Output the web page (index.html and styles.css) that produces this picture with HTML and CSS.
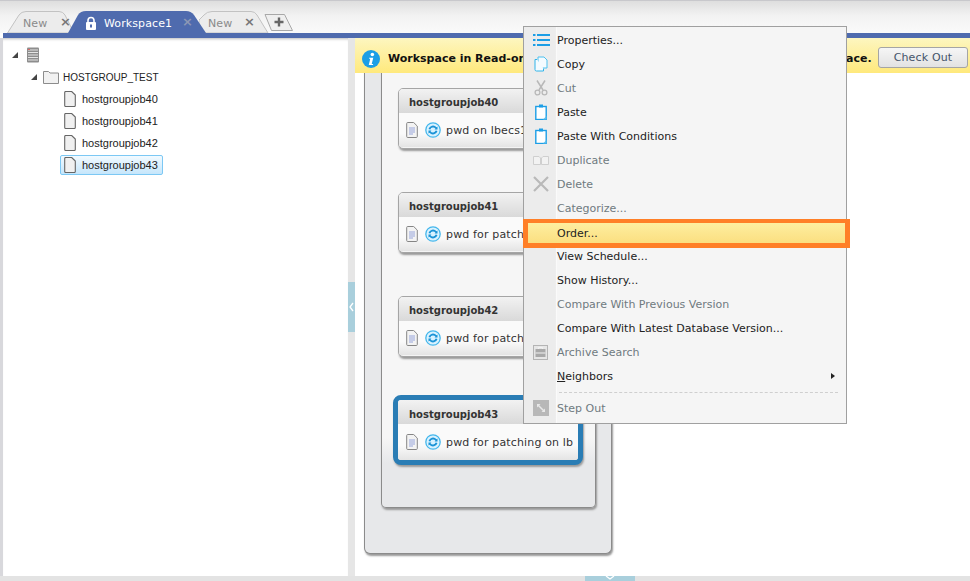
FILE: index.html
```html
<!DOCTYPE html>
<html lang="en">
<head>
<meta charset="utf-8">
<title>Workspace1</title>
<link rel="stylesheet" href="styles.css">
</head>
<body>
<div class="app">
  <div class="tabbar">
    <div class="tab tab-first">
      <svg class="tab-shape" width="68" height="22" viewBox="0 0 68 22"><path d="M0.500 22L12 4Q14.500 0.500 19 0.500H52Q56 0.500 58 4L67 22z" fill="#ececec" stroke="#c2c2c2"/></svg>
      <span class="tab-label">New</span><i class="tab-x">×</i>
    </div>
    <div class="tab tab-active">
      <svg class="tab-shape" width="138" height="22" viewBox="0 0 138 22"><path d="M0 22L10 4Q12.500 0 18 0H118Q123 0 126 4L138 22z" fill="#4f6bae"/></svg>
      <svg class="lock" width="12" height="14" viewBox="0 0 12 14"><path d="M3 7V4.500a3 3 0 0 1 6 0V7" fill="none" stroke="#fff" stroke-width="1.600"/><rect x="1" y="6" width="10" height="8" rx="1" fill="#fff"/><rect x="5" y="8.500" width="2" height="3" fill="#4f6bae"/></svg>
      <span class="tab-label">Workspace1</span><i class="tab-x tab-x-dim">×</i>
    </div>
    <div class="tab tab-third">
      <svg class="tab-shape" width="70" height="22" viewBox="0 0 70 22"><path d="M0 22V9L5 4Q8 0.500 13 0.500H52Q56 0.500 58 4L69 22z" fill="#ececec" stroke="#c2c2c2"/></svg>
      <span class="tab-label">New</span><i class="tab-x tab-x-third">×</i>
    </div>
    <div class="tab-add">
      <svg width="30" height="19" viewBox="0 0 30 19"><path d="M1 1.500H20.500L28.500 17.500H7.500z" fill="#efefef" stroke="#a8a8a8"/><path d="M15 4.500v9M10.500 9h9" stroke="#666" stroke-width="2.400"/></svg>
    </div>
  </div>
  <div class="stripe"></div>
  <div class="content">
    <div class="tree">
      <div class="tree-row tree-root">
        <span class="twist"></span>
        <svg width="14" height="16" viewBox="0 0 14 16"><rect x="1" y="0.500" width="12" height="15" rx="1" fill="#8d8d8d"/><path d="M2 3h10M2 5.500h10M2 8h10M2 10.500h10M2 13h10" stroke="#e4e4e4" stroke-width="1"/><rect x="2" y="2" width="2" height="1" fill="#d66"/></svg>
      </div>
      <div class="tree-row tree-folder">
        <span class="twist"></span>
        <svg width="16" height="14" viewBox="0 0 16 14"><path d="M0.500 13.500V1.500h5l1.500 1.500h8.500v10.500z" fill="#f1f1f1" stroke="#8c8c8c"/></svg>
        <span class="tree-label">HOSTGROUP_TEST</span>
      </div>
      <div class="tree-row tree-job">
        <svg class="file" width="12" height="16" viewBox="0 0 12 16"><path d="M0.700 1.500q0-1 1-1h6l3.600 3.600v10.400q0 1-1 1h-8.600q-1 0-1-1z" fill="#f0f0f0" stroke="#666" stroke-width="1.100"/></svg>
        <span class="tree-label">hostgroupjob40</span>
      </div>
      <div class="tree-row tree-job">
        <svg class="file" width="12" height="16" viewBox="0 0 12 16"><path d="M0.700 1.500q0-1 1-1h6l3.600 3.600v10.400q0 1-1 1h-8.600q-1 0-1-1z" fill="#f0f0f0" stroke="#666" stroke-width="1.100"/></svg>
        <span class="tree-label">hostgroupjob41</span>
      </div>
      <div class="tree-row tree-job">
        <svg class="file" width="12" height="16" viewBox="0 0 12 16"><path d="M0.700 1.500q0-1 1-1h6l3.600 3.600v10.400q0 1-1 1h-8.600q-1 0-1-1z" fill="#f0f0f0" stroke="#666" stroke-width="1.100"/></svg>
        <span class="tree-label">hostgroupjob42</span>
      </div>
      <div class="tree-row tree-job tree-selected">
        <svg class="file" width="12" height="16" viewBox="0 0 12 16"><path d="M0.700 1.500q0-1 1-1h6l3.600 3.600v10.400q0 1-1 1h-8.600q-1 0-1-1z" fill="#f0f0f0" stroke="#666" stroke-width="1.100"/></svg>
        <span class="tree-label">hostgroupjob43</span>
      </div>
    </div>
    <div class="splitter"><div class="split-handle"><svg width="5" height="10" viewBox="0 0 5 10"><path d="M4 1L1 5l3 4" fill="none" stroke="#fff" stroke-width="1.300"/></svg></div></div>
    <div class="main">
      <div class="banner">
        <svg width="18" height="18" viewBox="0 0 20 20"><circle cx="10" cy="10" r="10" fill="#1c9ee6"/><circle cx="11.500" cy="5" r="2" fill="#fff"/><path d="M8 8.500h4.500l-1.700 7h1.500v1.300H7.500l1.700-7H8z" fill="#fff"/></svg>
        <span class="banner-text">Workspace in Read-only mode.</span>
        <span class="banner-end">ace.</span>
        <button class="checkout">Check Out</button>
      </div>
      <div class="box-outer">
        <div class="box-inner">
          <div class="card">
            <div class="card-title">hostgroupjob40</div>
            <div class="card-body">
              <svg width="12" height="16" viewBox="0 0 12 16"><path d="M0.700 1.500q0-1 1-1h6l3.600 3.600v10.400q0 1-1 1h-8.600q-1 0-1-1z" fill="#f3f3f3" stroke="#858585"/><path d="M3 6h6M3 8h6M3 10h6M3 12h4" stroke="#98a6dc" stroke-width="1.200"/></svg>
              <svg width="16" height="16" viewBox="0 0 16 16"><circle cx="8" cy="8" r="7.200" fill="#d9f2ff" stroke="#45b7ec" stroke-width="1.300"/><path d="M3.500 7a4.600 4.600 0 0 1 8-1.800l1-.8v3.200H9.500l1-.9a3 3 0 0 0-5.200.8zM12.500 9a4.600 4.600 0 0 1-8 1.800l-1 .8V8.400h3l-1 .9a3 3 0 0 0 5.200-.8z" fill="#1b93d6"/></svg>
              <span class="card-text">pwd on lbecs1</span>
            </div>
          </div>
          <div class="card">
            <div class="card-title">hostgroupjob41</div>
            <div class="card-body">
              <svg width="12" height="16" viewBox="0 0 12 16"><path d="M0.700 1.500q0-1 1-1h6l3.600 3.600v10.400q0 1-1 1h-8.600q-1 0-1-1z" fill="#f3f3f3" stroke="#858585"/><path d="M3 6h6M3 8h6M3 10h6M3 12h4" stroke="#98a6dc" stroke-width="1.200"/></svg>
              <svg width="16" height="16" viewBox="0 0 16 16"><circle cx="8" cy="8" r="7.200" fill="#d9f2ff" stroke="#45b7ec" stroke-width="1.300"/><path d="M3.500 7a4.600 4.600 0 0 1 8-1.800l1-.8v3.200H9.500l1-.9a3 3 0 0 0-5.200.8zM12.500 9a4.600 4.600 0 0 1-8 1.800l-1 .8V8.400h3l-1 .9a3 3 0 0 0 5.200-.8z" fill="#1b93d6"/></svg>
              <span class="card-text">pwd for patching on lb</span>
            </div>
          </div>
          <div class="card">
            <div class="card-title">hostgroupjob42</div>
            <div class="card-body">
              <svg width="12" height="16" viewBox="0 0 12 16"><path d="M0.700 1.500q0-1 1-1h6l3.600 3.600v10.400q0 1-1 1h-8.600q-1 0-1-1z" fill="#f3f3f3" stroke="#858585"/><path d="M3 6h6M3 8h6M3 10h6M3 12h4" stroke="#98a6dc" stroke-width="1.200"/></svg>
              <svg width="16" height="16" viewBox="0 0 16 16"><circle cx="8" cy="8" r="7.200" fill="#d9f2ff" stroke="#45b7ec" stroke-width="1.300"/><path d="M3.500 7a4.600 4.600 0 0 1 8-1.800l1-.8v3.200H9.500l1-.9a3 3 0 0 0-5.200.8zM12.500 9a4.600 4.600 0 0 1-8 1.800l-1 .8V8.400h3l-1 .9a3 3 0 0 0 5.200-.8z" fill="#1b93d6"/></svg>
              <span class="card-text">pwd for patching on lb</span>
            </div>
          </div>
          <div class="card card-selected">
            <div class="card-title">hostgroupjob43</div>
            <div class="card-body">
              <svg width="12" height="16" viewBox="0 0 12 16"><path d="M0.700 1.500q0-1 1-1h6l3.600 3.600v10.400q0 1-1 1h-8.600q-1 0-1-1z" fill="#f3f3f3" stroke="#858585"/><path d="M3 6h6M3 8h6M3 10h6M3 12h4" stroke="#98a6dc" stroke-width="1.200"/></svg>
              <svg width="16" height="16" viewBox="0 0 16 16"><circle cx="8" cy="8" r="7.200" fill="#d9f2ff" stroke="#45b7ec" stroke-width="1.300"/><path d="M3.500 7a4.600 4.600 0 0 1 8-1.800l1-.8v3.200H9.500l1-.9a3 3 0 0 0-5.200.8zM12.500 9a4.600 4.600 0 0 1-8 1.800l-1 .8V8.400h3l-1 .9a3 3 0 0 0 5.200-.8z" fill="#1b93d6"/></svg>
              <span class="card-text">pwd for patching on lb</span>
            </div>
          </div>
        </div>
      </div>
    </div>
  </div>
  <div class="bottombar"><div class="bottom-handle"><svg width="10" height="5" viewBox="0 0 10 5"><path d="M1 0l4 3 4-3" fill="none" stroke="#fff" stroke-width="1.300"/></svg></div></div>
</div>

<div class="menu">
  <div class="mi"><span class="mi-icon"><svg width="18" height="14" viewBox="0 0 18 14"><path d="M5 2h13M5 7h13M5 12h13" stroke="#1c9ee6" stroke-width="2"/><path d="M1 2h2.500M1 7h2.500M1 12h2.500" stroke="#1c9ee6" stroke-width="2"/></svg></span><span class="mi-label">Properties...</span></div>
  <div class="mi"><span class="mi-icon"><svg width="14" height="16" viewBox="0 0 14 16"><path d="M4 1h6l3 3v8H4z" fill="#f4fbff" stroke="#4cc1ef"/><path d="M3 3.500H1v10q0 1.500 1.500 1.500h7v-2.500" fill="#f4fbff" stroke="#2fb4ea"/></svg></span><span class="mi-label">Copy</span></div>
  <div class="mi mi-off"><span class="mi-icon"><svg width="14" height="16" viewBox="0 0 14 16"><path d="M3 0.500L9 10M11 0.500L5 10" stroke="#b8b8b8" stroke-width="1.500"/><circle cx="3.500" cy="12.500" r="2.400" fill="none" stroke="#b8b8b8" stroke-width="1.300"/><circle cx="10.500" cy="12.500" r="2.400" fill="none" stroke="#b8b8b8" stroke-width="1.300"/></svg></span><span class="mi-label">Cut</span></div>
  <div class="mi"><span class="mi-icon"><svg width="12" height="16" viewBox="0 0 12 16"><rect x="0.800" y="2.500" width="10.400" height="13" fill="#fff" stroke="#1c9ee6" stroke-width="1.400"/><rect x="4" y="0.500" width="4" height="3" fill="#1c9ee6"/><path d="M8 15.500h3.500V12z" fill="#5fc0ee"/></svg></span><span class="mi-label">Paste</span></div>
  <div class="mi"><span class="mi-icon"><svg width="12" height="16" viewBox="0 0 12 16"><rect x="0.800" y="2.500" width="10.400" height="13" fill="#fff" stroke="#1c9ee6" stroke-width="1.400"/><rect x="4" y="0.500" width="4" height="3" fill="#1c9ee6"/><path d="M8 15.500h3.500V12z" fill="#5fc0ee"/></svg></span><span class="mi-label">Paste With Conditions</span></div>
  <div class="mi mi-off"><span class="mi-icon"><svg width="16" height="10" viewBox="0 0 16 10"><path d="M0.500 1.500h5.500l1.500 1.500v6.500h-7zM8.500 3l1.500-1.500h5.500v8h-7z" fill="#f2f2f2" stroke="#cfcfcf"/></svg></span><span class="mi-label">Duplicate</span></div>
  <div class="mi mi-off"><span class="mi-icon"><svg width="16" height="16" viewBox="0 0 16 16"><path d="M1 1l14 14M15 1L1 15" stroke="#b9b9b9" stroke-width="2.200"/></svg></span><span class="mi-label">Delete</span></div>
  <div class="mi mi-off"><span class="mi-icon"></span><span class="mi-label">Categorize...</span></div>
  <div class="mi mi-hot"><span class="mi-icon"></span><span class="mi-label">Order...</span></div>
  <div class="mi"><span class="mi-icon"></span><span class="mi-label">View Schedule...</span></div>
  <div class="mi"><span class="mi-icon"></span><span class="mi-label">Show History...</span></div>
  <div class="mi mi-off"><span class="mi-icon"></span><span class="mi-label">Compare With Previous Version</span></div>
  <div class="mi"><span class="mi-icon"></span><span class="mi-label">Compare With Latest Database Version...</span></div>
  <div class="mi mi-off"><span class="mi-icon"><svg width="15" height="15" viewBox="0 0 15 15"><rect x="0.500" y="0.500" width="14" height="14" fill="#e6e6e6" stroke="#b4b4b4"/><rect x="2.500" y="4" width="10" height="8" fill="#a9a9a9"/><path d="M5.500 4V2.500h4V4M2.500 8h10" fill="none" stroke="#f2f2f2"/></svg></span><span class="mi-label">Archive Search</span></div>
  <div class="mi"><span class="mi-icon"></span><span class="mi-label"><u>N</u>eighbors</span><span class="mi-arrow"></span></div>
  <div class="mi-sep"></div>
  <div class="mi mi-off"><span class="mi-icon"><svg width="16" height="16" viewBox="0 0 16 16"><rect width="16" height="16" fill="#b8b8b8"/><path d="M5 5l6 6" stroke="#e8e8e8" stroke-width="1.500"/><path d="M4 4h3.500L4 7.500zM12 12H8.500L12 8.500z" fill="#e8e8e8"/></svg></span><span class="mi-label">Step Out</span></div>
</div>
</body>
</html>
```

FILE: styles.css
```css
* { box-sizing: border-box; }
html, body { margin: 0; height: 100%; }
body {
  width: 970px;
  height: 581px;
  overflow: hidden;
  position: relative;
  font-family: "DejaVu Sans", "Liberation Sans", sans-serif;
  font-size: 11px;
  background: #fff;
  color: #222;
}
.app { display: flex; flex-direction: column; height: 581px; }

.tabbar {
  height: 33px;
  flex: none;
  display: flex;
  align-items: flex-end;
  padding-left: 7px;
  border-top: 1px solid #c8c8cc;
  background: linear-gradient(#dedede, #f2f2f2 45%, #fafafa);
}
.tab {
  height: 22px;
  display: flex;
  align-items: center;
  position: relative;
  padding-top: 2px;
  font-size: 11px;
  letter-spacing: 0.100px;
}
.tab-shape { position: absolute; left: 0; top: 0; }
.tab-label, .lock { position: relative; }
.tab-first { width: 68px; padding-left: 16px; color: #8a8a8a; }
.tab-active {
  width: 138px;
  margin-left: -7px;
  padding-left: 17px;
  gap: 7px;
  color: #fff;
  z-index: 1;
}
.tab-third { width: 70px; margin-left: -7px; padding-left: 9px; color: #8a8a8a; }
.tab-x {
  position: absolute;
  right: 4px;
  top: 3px;
  font-style: normal;
  font-weight: bold;
  font-size: 13px;
  color: #777;
}
.tab-x-dim { color: #8c97b4; right: 13px; }
.tab-x-third { right: 14px; }
.tab-add { width: 30px; height: 19px; margin-left: -5px; margin-bottom: 1px; }
.tab-add svg { display: block; }
.stripe { height: 5px; flex: none; background: #4f6bae; margin-left: 3px; }

.content { flex: 1; display: flex; min-height: 0; padding-left: 3px; background: #d8d8dc; }
.tree {
  width: 345px;
  flex: none;
  background: #fff;
  padding-top: 6px;
  box-shadow: inset 0 3px 3px -2px #bbb;
}
.tree-row {
  height: 22px;
  display: flex;
  align-items: center;
  color: #222;
  font-family: "Liberation Sans", sans-serif;
  font-size: 11px;
}
.tree-root { padding-left: 9px; gap: 8px; }
.tree-folder { padding-left: 28px; gap: 4px; font-size: 10px; }
.tree-folder .twist { margin-right: 2px; }
.tree-job { padding-left: 61px; gap: 6px; width: fit-content; }
.tree-label { white-space: nowrap; }
.tree-selected {
  margin-left: 57px;
  padding: 0 4px 0 3px;
  height: 20px;
  margin-top: 1px;
  border: 1px solid #7cc8f4;
  border-radius: 2px;
  background: linear-gradient(#f2faff, #c6e6fb);
}
.twist {
  width: 0;
  height: 0;
  border-style: solid;
  border-width: 0 0 6px 6px;
  border-color: transparent transparent #444 transparent;
}

.splitter { width: 7px; flex: none; background: #e6e6e6; display: flex; align-items: center; }
.split-handle {
  width: 7px;
  height: 50px;
  background: #a9cfdc;
  display: flex;
  align-items: center;
  justify-content: center;
}

.main { flex: 1; min-width: 0; background: #fff; position: relative; overflow: hidden; }
.banner {
  position: absolute;
  left: 0;
  right: 0;
  top: 0;
  height: 35px;
  z-index: 2;
  padding: 6px 0 0 7px;
  display: flex;
  align-items: center;
  background: linear-gradient(#fdf6c0, #ffe97c);
  font-size: 11px;
  font-weight: bold;
  color: #111;
}
.banner-text { margin-left: 8px; width: 458px; white-space: nowrap; }
.checkout {
  position: absolute;
  right: 2px;
  top: 9px;
  width: 90px;
  height: 21px;
  padding: 0;
  font-family: "DejaVu Sans", sans-serif;
  font-size: 11px;
  letter-spacing: 0.150px;
  color: #44546a;
  border: 1px solid #a5a5a5;
  border-radius: 3px;
  background: linear-gradient(#f6f6f6, #e2e2e2);
}

.box-outer {
  width: 248px;
  height: 516px;
  margin: 0 0 0 9px;
  padding: 0 0 46px 17px;
  background: #e7e8ea;
  border: 1px solid #8b8b8b;
  border-top: 0;
  border-radius: 0 0 6px 6px;
  box-shadow: 1px 2px 2px #999;
}
.box-inner {
  width: 215px;
  height: 470px;
  padding: 50px 0 0 16px;
  margin-left: -1px;
  background: linear-gradient(#f6f6f6 0, #f6f6f6 400px, #e7e8ea 425px);
  border: 1px solid #8b8b8b;
  border-top: 0;
  border-radius: 0 0 5px 5px;
  box-shadow: 1px 2px 2px #999;
}
.card {
  width: 180px;
  height: 61px;
  margin-bottom: 43px;
  background: #f4f4f4;
  border: 1px solid #a5a5a5;
  border-radius: 5px;
  box-shadow: 1px 2px 2px #999;
  overflow: hidden;
}
.card-title {
  height: 24px;
  padding: 7px 0 0 10px;
  font-size: 10px;
  font-weight: bold;
  line-height: 14px;
  color: #333;
  background: linear-gradient(#f2f2f2, #d9d9d9);
}
.card-body {
  height: 34px;
  display: flex;
  align-items: center;
  gap: 7px;
  padding-left: 7px;
  color: #333;
  white-space: nowrap;
  background: linear-gradient(#fafafa 60%, #e4e4e4);
}
.card-body svg { flex: none; }
.card-text { font-size: 11px; letter-spacing: 0.150px; margin-left: -2px; }
.card-selected {
  width: 190px;
  height: 70px;
  margin: -5px 0 0 -5px;
  border: 5px solid #2a7db5;
  border-radius: 8px;
}
.card-selected .card-title { padding: 8px 0 0 11px; }
.card-selected .card-body { height: 36px; padding-left: 8px; }

.bottombar { height: 5px; flex: none; background: #e3e3e3; display: flex; justify-content: center; }
.bottom-handle {
  width: 50px;
  height: 5px;
  margin-left: 250px;
  background: #a9cfdc;
  display: flex;
  justify-content: center;
}

.menu {
  position: absolute;
  left: 523px;
  top: 26px;
  width: 324px;
  height: 398px;
  z-index: 5;
  padding: 1px 0 0 1px;
  background: linear-gradient(90deg, #ececec 0, #ececec 31px, #dcdcdc 31px, #fff 32px, #f5f5f5 33px);
  border: 1px solid #a0a0a0;
  font-size: 11px;
  color: #222;
}
.mi { height: 24px; display: flex; align-items: center; position: relative; white-space: nowrap; }
.mi-icon { width: 31px; flex: none; display: flex; align-items: center; justify-content: center; margin-right: 1px; }
.mi-off { color: #6f7a80; }
.mi-hot {
  width: 327px;
  height: 29px;
  margin: -1px 0 -4px -2px;
  padding-left: 1px;
  border: solid #ff7f27;
  border-width: 4px 5px 5px 5px;
  background: linear-gradient(#fdeea0, #fbdf80);
  background-clip: padding-box;
  z-index: 1;
}
.mi-hot .mi-icon { width: 27px; }
.mi-arrow {
  position: absolute;
  right: 11px;
  top: 9px;
  border-style: solid;
  border-width: 3px 0 3px 4px;
  border-color: transparent transparent transparent #222;
}
.mi-sep { height: 0; margin: 4px 8px 3px 34px; border-top: 1px dashed #cfcfcf; }
```
